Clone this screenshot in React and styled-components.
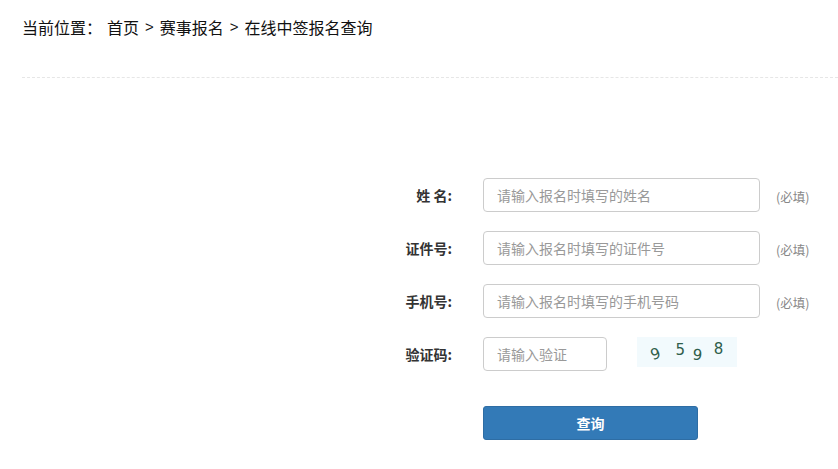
import React from "react";
import styled, { createGlobalStyle } from "styled-components";

const Global = createGlobalStyle`
  body {
    margin: 0;
    background: #fff;
    font-family: "Noto Sans CJK SC", "Noto Sans", sans-serif;
    color: #333;
  }
`;

const Page = styled.div`
  padding-left: 22px;
`;

const Crumbs = styled.div`
  padding-top: 17px;
  font-size: 16px;
  line-height: 20px;
  color: #111;
  display: flex;
  align-items: center;
`;

const CrumbLabel = styled.span`
  margin-right: 5px;
`;

const Sep = styled.span`
  margin: 0 6px;
  font-family: "Liberation Sans", sans-serif;
  font-size: 15px;
`;

const Divider = styled.div`
  margin-top: 40px;
  border-top: 1px dashed #e6e6e6;
`;

const Form = styled.form`
  margin-top: 100px;
  margin-left: 381px;
  display: grid;
  grid-template-columns: 80px auto auto;
  justify-content: start;
  row-gap: 19px;
  align-items: center;
`;

const Label = styled.label`
  font-size: 14px;
  font-weight: bold;
  color: #333;
  text-align: right;
  margin-right: 31px;
  white-space: pre;
`;

const Input = styled.input`
  box-sizing: border-box;
  width: ${p => p.$w}px;
  height: 34px;
  border: 1px solid #ccc;
  border-radius: 4px;
  padding: 0 13px 1px;
  font-size: 14px;
  font-family: inherit;
  outline: none;
  &::placeholder { color: #999; }
`;

const Note = styled.span`
  font-size: 12.5px;
  color: #888;
  margin-left: 16px;
  padding-top: 2px;
`;

const CodeCell = styled.div`
  display: flex;
  align-items: flex-start;
  gap: 30px;
`;

const Captcha = styled.div`
  width: 100px;
  height: 30px;
  background: #f2fafd;
  display: flex;
  align-items: center;
  padding-left: 13px;
  box-sizing: border-box;
`;

const Digit = styled.span`
  font-family: "DejaVu Sans", sans-serif;
  font-size: 15px;
  color: #2f5e4b;
  display: inline-block;
  margin-left: ${p => p.$gap}px;
  transform: rotate(${p => p.$r}deg) translateY(${p => p.$y}px);
`;

const Button = styled.button`
  grid-column: 2;
  margin-top: 16px;
  width: 215px;
  height: 34px;
  border: 1px solid #2e6da4;
  border-radius: 3px;
  background: #337ab7;
  color: #fff;
  font-size: 14px;
  font-weight: bold;
  font-family: inherit;
`;

const digits = [
  { d: "9", r: -20, y: 2, gap: 0 },
  { d: "5", r: 0, y: -2, gap: 16 },
  { d: "9", r: 5, y: 3, gap: 8 },
  { d: "8", r: 0, y: -3, gap: 11 },
];

export default function App() {
  return (
    <Page>
      <Global />
      <Crumbs>
        <CrumbLabel>当前位置：</CrumbLabel>
        <span>首页</span>
        <Sep>&gt;</Sep>
        <span>赛事报名</span>
        <Sep>&gt;</Sep>
        <span>在线中签报名查询</span>
      </Crumbs>
      <Divider />
      <Form onSubmit={e => e.preventDefault()}>
        <Label>姓 名:</Label>
        <Input $w={277} placeholder="请输入报名时填写的姓名" />
        <Note>(必填)</Note>

        <Label>证件号:</Label>
        <Input $w={277} placeholder="请输入报名时填写的证件号" />
        <Note>(必填)</Note>

        <Label>手机号:</Label>
        <Input $w={277} placeholder="请输入报名时填写的手机号码" />
        <Note>(必填)</Note>

        <Label>验证码:</Label>
        <CodeCell>
          <Input $w={124} placeholder="请输入验证" />
          <Captcha>
            {digits.map((x, i) => (
              <Digit key={i} $r={x.r} $y={x.y} $gap={x.gap}>{x.d}</Digit>
            ))}
          </Captcha>
        </CodeCell>
        <span />

        <Button type="submit">查询</Button>
      </Form>
    </Page>
  );
}
